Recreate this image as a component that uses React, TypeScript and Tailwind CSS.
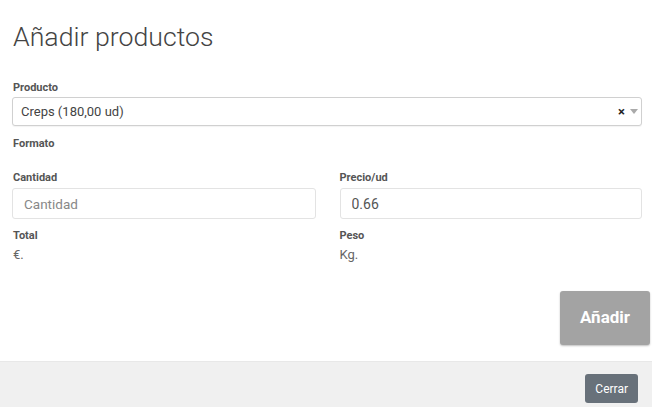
import { useState } from "react";

function Label({ children }: { children: React.ReactNode }) {
	return <div className="text-[11px] font-bold leading-[14px] text-[#555]">{children}</div>;
}

export default function App() {
	const [cantidad, setCantidad] = useState("");
	const [precio, setPrecio] = useState("0.66");

	return (
		<div className="flex h-[407px] w-[652px] flex-col bg-white font-['Roboto',sans-serif] text-[#444]">
			<div className="flex h-[361px] flex-col pl-[12px] pr-[10px]">
				<h1 className="mt-[20px] pl-[1px] text-[26.7px] font-light leading-[34px] text-[#444]">Añadir productos</h1>

				{/* Producto */}
				<div className="mt-[27px] pl-[1px]">
					<Label>Producto</Label>
				</div>
				<div className="mt-[2px] flex h-[29px] items-center rounded-[3px] border border-[#d0d0d0] bg-white pl-[8px] pr-[3px] shadow-[0_1px_1px_rgba(0,0,0,0.05)]">
					<span className="flex-1 text-[13px] text-[#444]">Creps (180,00 ud)</span>
					<span className="text-[13px] font-bold leading-none text-[#222]">×</span>
					<svg width="8" height="5" viewBox="0 0 8 5" className="ml-[5px]">
						<path d="M0 0h8L4 5z" fill="#aaa" />
					</svg>
				</div>

				<div className="mt-[11px] pl-[1px]">
					<Label>Formato</Label>
				</div>

				{/* Cantidad / Precio */}
				<div className="mt-[20px] grid grid-cols-2 gap-x-[24px] pl-[1px]">
					<div>
						<Label>Cantidad</Label>
						<input
							value={cantidad}
							onChange={(e) => setCantidad(e.target.value)}
							placeholder="Cantidad"
							className="mt-[3px] h-[31px] w-[304px] -ml-[1px] rounded-[3px] border border-[#e3e3e3] px-[11px] text-[13.5px] text-[#555] outline-none placeholder:text-[#888]"
						/>
					</div>
					<div>
						<Label>Precio/ud</Label>
						<input
							value={precio}
							onChange={(e) => setPrecio(e.target.value)}
							className="mt-[3px] h-[31px] w-full rounded-[3px] border border-[#e3e3e3] px-[11px] text-[14px] text-[#555] outline-none"
						/>
					</div>
				</div>

				{/* Total / Peso */}
				<div className="mt-[10px] grid grid-cols-2 gap-x-[24px] pl-[1px]">
					<div>
						<Label>Total</Label>
						<div className="mt-[2px] text-[13px] text-[#666]">€.</div>
					</div>
					<div>
						<Label>Peso</Label>
						<div className="mt-[2px] text-[13px] text-[#666]">Kg.</div>
					</div>
				</div>

				<div className="mt-auto mb-[16px] -mr-[8px] flex justify-end">
					<button className="h-[54px] w-[90px] rounded-[3px] bg-[#a3a3a3] text-[17px] font-bold text-white shadow-[0_1px_2px_rgba(0,0,0,0.25)]">
						Añadir
					</button>
				</div>
			</div>

			{/* Footer */}
			<div className="flex flex-1 items-start justify-end border-t border-[#e8e8e8] bg-[#f0f0f0] pr-[14px] pt-[12px]">
				<button className="h-[29px] rounded-[3px] bg-[#68717a] px-[10px] text-[12px] text-white">Cerrar</button>
			</div>
		</div>
	);
}
